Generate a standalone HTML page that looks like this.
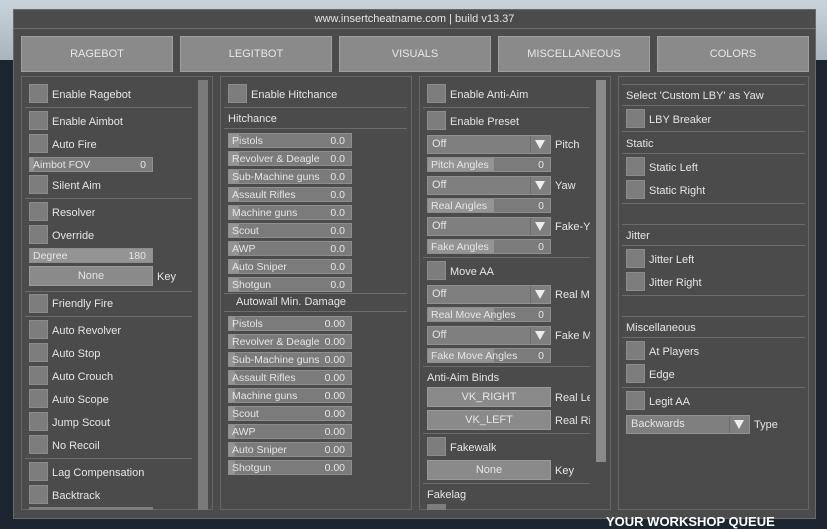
<!DOCTYPE html>
<html><head><meta charset="utf-8"><style>
*{margin:0;padding:0;box-sizing:border-box}
body{width:827px;height:529px;overflow:hidden;position:relative;font-family:"Liberation Sans",sans-serif;font-size:11px;color:#e6e6e6;background:#1d2630}
div,span{position:absolute}
.bg1{left:0;top:0;width:827px;height:60px;background:linear-gradient(#c9d3db,#aab4bd)}
.bg2{left:0;top:60px;width:827px;height:469px;background:#1c2530}
.win{left:13px;top:9px;width:803px;height:510px;background:#4b4b4b;border:1px solid #6a6a6a}
.tb{left:13px;top:28px;width:803px;height:1px;background:#6e6e6e}
.tab{top:36px;height:36px;width:152px;background:#8a8a8a;border:1px solid #a0a0a0;color:#e8e8e8;text-align:center;line-height:34px;font-size:11px}
.pan{top:76px;height:434px;width:192px;border:1px solid #666;background:#4b4b4b}
.cb{width:19px;height:19px;background:#7d7d7d;border:1px solid #8c8c8c}
.t{white-space:nowrap;overflow:hidden}
.sep{height:1px;background:#6c6c6c}
.sl{width:124px;height:15px;background:#7b7b7b;border:1px solid #8e8e8e;font-size:10.5px}
.sl i{position:absolute;left:0;top:0;height:13px;background:#949494}
.sl b{position:absolute;left:3px;top:1px;font-weight:normal;line-height:13px;white-space:nowrap}
.sl em{position:absolute;right:6px;top:1px;font-style:normal;line-height:13px}
.btn{width:124px;height:20px;background:#8a8a8a;border:1px solid #9a9a9a;text-align:center;line-height:18px}
.dd{width:124px;height:19px;background:#7f7f7f;border:1px solid #909090;line-height:17px;padding-left:4px}
.dd:after{content:"";position:absolute;left:102px;top:0;width:1px;height:17px;background:#6d6d6d}
.dd s{position:absolute;right:5px;top:4px;width:0;height:0;border-left:5px solid transparent;border-right:5px solid transparent;border-top:9px solid #eee;text-decoration:none}
.sb{width:10px;background:#7a7a7a}
</style></head><body>
<div class="bg1"></div><div class="bg2"></div>
<div class="win"></div><div class="tb"></div>
<span class="t" style="left:13px;top:13px;width:803px;text-align:center">www.insertcheatname.com | build v13.37</span>
<div class="tab" style="left:21px">RAGEBOT</div>
<div class="tab" style="left:180px">LEGITBOT</div>
<div class="tab" style="left:339px">VISUALS</div>
<div class="tab" style="left:498px">MISCELLANEOUS</div>
<div class="tab" style="left:657px">COLORS</div>
<div class="pan" style="left:21px"></div>
<div class="pan" style="left:220px"></div>
<div class="pan" style="left:419px"></div>
<div class="pan" style="left:618px;width:191px"></div>
<div class="sb" style="left:198px;top:80px;height:430px"></div>
<div class="sb" style="left:596px;top:80px;height:382px;background:#8a8a8a"></div>

<!-- panel 1 -->
<div class="cb" style="left:29px;top:84px"></div><span class="t" style="left:52px;top:89px">Enable Ragebot</span>
<div class="sep" style="left:25px;top:107px;width:167px"></div>
<div class="cb" style="left:29px;top:111px"></div><span class="t" style="left:52px;top:116px">Enable Aimbot</span>
<div class="cb" style="left:29px;top:134px"></div><span class="t" style="left:52px;top:139px">Auto Fire</span>
<div class="sl" style="left:29px;top:157px"><i style="width:4px"></i><b>Aimbot FOV</b><em>0</em></div>
<div class="cb" style="left:29px;top:175px"></div><span class="t" style="left:52px;top:180px">Silent Aim</span>
<div class="sep" style="left:25px;top:198px;width:167px"></div>
<div class="cb" style="left:29px;top:202px"></div><span class="t" style="left:52px;top:207px">Resolver</span>
<div class="cb" style="left:29px;top:225px"></div><span class="t" style="left:52px;top:230px">Override</span>
<div class="sl" style="left:29px;top:248px"><i style="width:122px"></i><b>Degree</b><em>180</em></div>
<div class="btn" style="left:29px;top:266px">None</div><span class="t" style="left:157px;top:271px">Key</span>
<div class="sep" style="left:25px;top:291px;width:167px"></div>
<div class="cb" style="left:29px;top:294px"></div><span class="t" style="left:52px;top:298px">Friendly Fire</span>
<div class="sep" style="left:25px;top:316px;width:167px"></div>
<div class="cb" style="left:29px;top:320px"></div><span class="t" style="left:52px;top:325px">Auto Revolver</span>
<div class="cb" style="left:29px;top:343px"></div><span class="t" style="left:52px;top:348px">Auto Stop</span>
<div class="cb" style="left:29px;top:366px"></div><span class="t" style="left:52px;top:371px">Auto Crouch</span>
<div class="cb" style="left:29px;top:389px"></div><span class="t" style="left:52px;top:394px">Auto Scope</span>
<div class="cb" style="left:29px;top:412px"></div><span class="t" style="left:52px;top:417px">Jump Scout</span>
<div class="cb" style="left:29px;top:435px"></div><span class="t" style="left:52px;top:440px">No Recoil</span>
<div class="sep" style="left:25px;top:458px;width:167px"></div>
<div class="cb" style="left:29px;top:462px"></div><span class="t" style="left:52px;top:467px">Lag Compensation</span>
<div class="cb" style="left:29px;top:485px"></div><span class="t" style="left:52px;top:490px">Backtrack</span>
<div style="left:29px;top:507px;width:124px;height:3px;background:#7d7d7d"></div>

<!-- panel 2 -->
<div class="cb" style="left:228px;top:84px"></div><span class="t" style="left:251px;top:89px">Enable Hitchance</span>
<div class="sep" style="left:224px;top:107px;width:183px"></div>
<span class="t" style="left:228px;top:113px">Hitchance</span>
<div class="sep" style="left:224px;top:128px;width:183px"></div>
<div class="sl" style="left:228px;top:133px"><i style="width:10px"></i><b>Pistols</b><em>0.0</em></div>
<div class="sl" style="left:228px;top:151px"><i style="width:10px"></i><b>Revolver &amp; Deagle</b><em>0.0</em></div>
<div class="sl" style="left:228px;top:169px"><i style="width:10px"></i><b>Sub-Machine guns</b><em>0.0</em></div>
<div class="sl" style="left:228px;top:187px"><i style="width:10px"></i><b>Assault Rifles</b><em>0.0</em></div>
<div class="sl" style="left:228px;top:205px"><i style="width:10px"></i><b>Machine guns</b><em>0.0</em></div>
<div class="sl" style="left:228px;top:223px"><i style="width:10px"></i><b>Scout</b><em>0.0</em></div>
<div class="sl" style="left:228px;top:241px"><i style="width:10px"></i><b>AWP</b><em>0.0</em></div>
<div class="sl" style="left:228px;top:259px"><i style="width:10px"></i><b>Auto Sniper</b><em>0.0</em></div>
<div class="sl" style="left:228px;top:277px"><i style="width:10px"></i><b>Shotgun</b><em>0.0</em></div>
<div class="sep" style="left:224px;top:293px;width:183px"></div>
<span class="t" style="left:236px;top:296px">Autowall Min. Damage</span>
<div class="sep" style="left:224px;top:311px;width:183px"></div>
<div class="sl" style="left:228px;top:316px"><i style="width:6px"></i><b>Pistols</b><em>0.00</em></div>
<div class="sl" style="left:228px;top:334px"><i style="width:6px"></i><b>Revolver &amp; Deagle</b><em>0.00</em></div>
<div class="sl" style="left:228px;top:352px"><i style="width:6px"></i><b>Sub-Machine guns</b><em>0.00</em></div>
<div class="sl" style="left:228px;top:370px"><i style="width:6px"></i><b>Assault Rifles</b><em>0.00</em></div>
<div class="sl" style="left:228px;top:388px"><i style="width:6px"></i><b>Machine guns</b><em>0.00</em></div>
<div class="sl" style="left:228px;top:406px"><i style="width:6px"></i><b>Scout</b><em>0.00</em></div>
<div class="sl" style="left:228px;top:424px"><i style="width:6px"></i><b>AWP</b><em>0.00</em></div>
<div class="sl" style="left:228px;top:442px"><i style="width:6px"></i><b>Auto Sniper</b><em>0.00</em></div>
<div class="sl" style="left:228px;top:460px"><i style="width:6px"></i><b>Shotgun</b><em>0.00</em></div>

<!-- panel 3 -->
<div class="cb" style="left:427px;top:84px"></div><span class="t" style="left:450px;top:89px">Enable Anti-Aim</span>
<div class="sep" style="left:423px;top:107px;width:167px"></div>
<div class="cb" style="left:427px;top:111px"></div><span class="t" style="left:450px;top:116px">Enable Preset</span>
<div class="dd" style="left:427px;top:135px">Off<s></s></div><span class="t" style="left:555px;top:139px;width:35px">Pitch</span>
<div class="sl" style="left:427px;top:157px"><i style="width:66px"></i><b>Pitch Angles</b><em>0</em></div>
<div class="dd" style="left:427px;top:176px">Off<s></s></div><span class="t" style="left:555px;top:180px;width:35px">Yaw</span>
<div class="sl" style="left:427px;top:198px"><i style="width:66px"></i><b>Real Angles</b><em>0</em></div>
<div class="dd" style="left:427px;top:217px">Off<s></s></div><span class="t" style="left:555px;top:221px;width:35px">Fake-Yaw</span>
<div class="sl" style="left:427px;top:239px"><i style="width:66px"></i><b>Fake Angles</b><em>0</em></div>
<div class="sep" style="left:423px;top:257px;width:167px"></div>
<div class="cb" style="left:427px;top:261px"></div><span class="t" style="left:450px;top:266px">Move AA</span>
<div class="dd" style="left:427px;top:285px">Off<s></s></div><span class="t" style="left:555px;top:289px;width:35px">Real Move</span>
<div class="sl" style="left:427px;top:307px"><i style="width:66px"></i><b>Real Move Angles</b><em>0</em></div>
<div class="dd" style="left:427px;top:326px">Off<s></s></div><span class="t" style="left:555px;top:330px;width:35px">Fake Move</span>
<div class="sl" style="left:427px;top:348px"><i style="width:66px"></i><b>Fake Move Angles</b><em>0</em></div>
<div class="sep" style="left:423px;top:366px;width:167px"></div>
<span class="t" style="left:427px;top:372px">Anti-Aim Binds</span>
<div class="btn" style="left:427px;top:387px">VK_RIGHT</div><span class="t" style="left:555px;top:392px;width:35px">Real Left</span>
<div class="btn" style="left:427px;top:410px">VK_LEFT</div><span class="t" style="left:555px;top:415px;width:35px">Real Right</span>
<div class="sep" style="left:423px;top:433px;width:167px"></div>
<div class="cb" style="left:427px;top:437px"></div><span class="t" style="left:450px;top:442px">Fakewalk</span>
<div class="btn" style="left:427px;top:460px">None</div><span class="t" style="left:555px;top:465px">Key</span>
<div class="sep" style="left:423px;top:483px;width:167px"></div>
<span class="t" style="left:427px;top:489px">Fakelag</span>
<div style="left:427px;top:504px;width:19px;height:6px;background:#7d7d7d"></div>

<!-- panel 4 -->
<div class="sep" style="left:622px;top:84px;width:183px"></div>
<span class="t" style="left:626px;top:90px">Select 'Custom LBY' as Yaw</span>
<div class="sep" style="left:622px;top:105px;width:183px"></div>
<div class="cb" style="left:626px;top:109px"></div><span class="t" style="left:649px;top:114px">LBY Breaker</span>
<div class="sep" style="left:622px;top:131px;width:183px"></div>
<span class="t" style="left:626px;top:138px">Static</span>
<div class="sep" style="left:622px;top:153px;width:183px"></div>
<div class="cb" style="left:626px;top:157px"></div><span class="t" style="left:649px;top:162px">Static Left</span>
<div class="cb" style="left:626px;top:180px"></div><span class="t" style="left:649px;top:185px">Static Right</span>
<div class="sep" style="left:622px;top:203px;width:183px"></div>
<div class="sep" style="left:622px;top:224px;width:183px"></div>
<span class="t" style="left:626px;top:230px">Jitter</span>
<div class="sep" style="left:622px;top:245px;width:183px"></div>
<div class="cb" style="left:626px;top:249px"></div><span class="t" style="left:649px;top:254px">Jitter Left</span>
<div class="cb" style="left:626px;top:272px"></div><span class="t" style="left:649px;top:277px">Jitter Right</span>
<div class="sep" style="left:622px;top:295px;width:183px"></div>
<div class="sep" style="left:622px;top:316px;width:183px"></div>
<span class="t" style="left:626px;top:322px">Miscellaneous</span>
<div class="sep" style="left:622px;top:337px;width:183px"></div>
<div class="cb" style="left:626px;top:341px"></div><span class="t" style="left:649px;top:346px">At Players</span>
<div class="cb" style="left:626px;top:364px"></div><span class="t" style="left:649px;top:369px">Edge</span>
<div class="sep" style="left:622px;top:387px;width:183px"></div>
<div class="cb" style="left:626px;top:391px"></div><span class="t" style="left:649px;top:396px">Legit AA</span>
<div class="dd" style="left:626px;top:415px">Backwards<s></s></div><span class="t" style="left:754px;top:419px">Type</span>

<span class="t" style="left:606px;top:514px;color:#fff;font-weight:bold;font-size:13px">YOUR WORKSHOP QUEUE</span>
</body></html>
